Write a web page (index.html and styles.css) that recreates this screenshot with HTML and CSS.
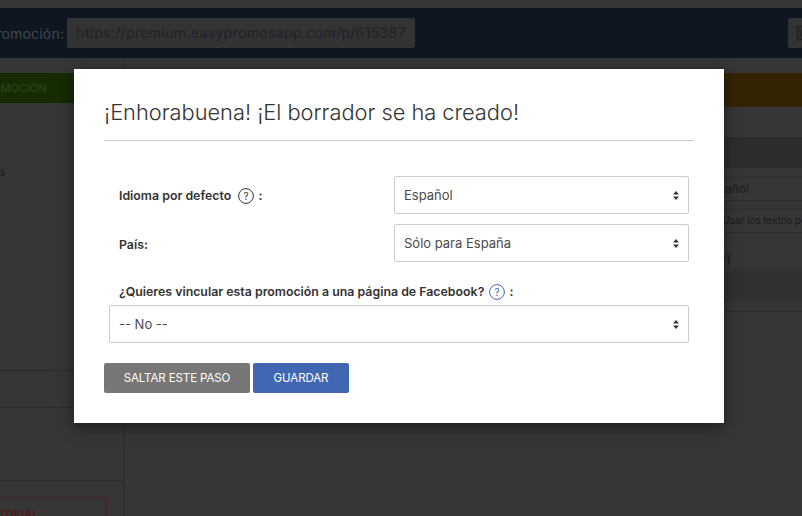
FILE: index.html
```html
<!DOCTYPE html>
<html lang="es">
<head>
<meta charset="utf-8">
<title>Promoción</title>
<link rel="stylesheet" href="styles.css">
</head>
<body>
<div class="page">
  <header class="topbar">
    <span class="url-label">Promoción:</span>
    <span class="url-field">https://premium.easypromosapp.com/p/615387</span>
    <span class="top-action">
      <svg class="top-icon" width="14" height="16" viewBox="0 0 14 16"><path d="M1.5 1.5h11v13h-11z M4.5 4v8" fill="none" stroke="#1f1f1f" stroke-width="1.5"/></svg>
    </span>
  </header>
  <div class="workspace">
    <aside class="sidebar">
      <div class="side-green">PROMOCIÓN</div>
      <div class="side-item">Opciones</div>
      <div class="side-rule side-rule-a"></div>
      <div class="side-rule side-rule-b"></div>
      <div class="side-rule side-rule-c"></div>
      <div class="tutorial">TUTORIAL</div>
    </aside>
    <main class="content">
      <div class="amber"></div>
      <div class="band"></div>
      <div class="row row-a">Español</div>
      <div class="row row-b">Usar los textos por defecto</div>
      <div class="row row-c">(ver)</div>
      <div class="band-light"></div>
      <div class="content-rule"></div>
    </main>
  </div>
  <section class="modal">
    <h2 class="modal-title">¡Enhorabuena! ¡El borrador se ha creado!</h2>
    <form class="form">
      <div class="field">
        <label class="field-label">Idioma por defecto
          <svg class="help help-first" width="16" height="16" viewBox="0 0 16 16"><circle cx="8" cy="8" r="7.4" fill="none" stroke="#333" stroke-width="1"/><text x="8" y="11.6" text-anchor="middle" class="help-mark">?</text></svg>
          :</label>
        <span class="select-wrap">
          <select class="select"><option>Español</option></select>
          <svg class="caret" width="6" height="9" viewBox="0 0 6 9"><path d="M3 0l3 3.5H0zM3 9L0 5.5h6z" fill="#333"/></svg>
        </span>
      </div>
      <div class="field">
        <label class="field-label">País:</label>
        <span class="select-wrap">
          <select class="select"><option>Sólo para España</option></select>
          <svg class="caret" width="6" height="9" viewBox="0 0 6 9"><path d="M3 0l3 3.5H0zM3 9L0 5.5h6z" fill="#333"/></svg>
        </span>
      </div>
      <div class="field-stack">
        <label class="stack-label">¿Quieres vincular esta promoción a una página de Facebook?
          <svg class="help" width="16" height="16" viewBox="0 0 16 16"><circle cx="8" cy="8" r="7.4" fill="none" stroke="#4267b2" stroke-width="1"/><text x="8" y="11.6" text-anchor="middle" class="help-mark help-blue">?</text></svg>
          :</label>
        <span class="select-wrap">
          <select class="select"><option>-- No --</option></select>
          <svg class="caret" width="6" height="9" viewBox="0 0 6 9"><path d="M3 0l3 3.5H0zM3 9L0 5.5h6z" fill="#333"/></svg>
        </span>
      </div>
      <div class="actions">
        <button type="button" class="btn btn-grey">SALTAR ESTE PASO</button>
        <button type="button" class="btn btn-blue">GUARDAR</button>
      </div>
    </form>
  </section>
</div>
</body>
</html>
```
FILE: styles.css
```css
* { box-sizing: border-box; }
html, body { margin: 0; padding: 0; }
body { background: #363636; font-family: Inter, "Liberation Sans", sans-serif; }

.page { position: relative; width: 802px; height: 516px; padding-top: 8px; overflow: hidden; background: #363636; }

.topbar {
  display: flex; align-items: center; height: 50px;
  background: #0e1622; white-space: nowrap;
}
.url-label {
  flex: none; width: 75px; margin-left: -13px;
  font-size: 14px; letter-spacing: 0.2px; color: #43474d; font-weight: 400;
}
.url-field {
  flex: none; width: 348px; height: 30px; margin-left: 5px; padding-left: 9px;
  background: #333; border-radius: 2px; color: #1e2229;
  font-size: 14px; line-height: 30px; letter-spacing: 0.35px;
}
.top-action {
  flex: none; display: flex; align-items: center; width: 40px; height: 30px;
  margin-left: 373px; padding-left: 8px; background: #333; border-radius: 2px;
}
.top-icon { flex: none; }

.workspace { display: flex; height: 458px; }
.sidebar { flex: none; width: 124px; border-right: 1px solid #2b2b2b; padding-top: 15px; }
.side-green {
  width: 124px; height: 30px; background: #152b04;
  color: #2a4a18; font-size: 11px; line-height: 30px; text-indent: -22px;
  overflow: hidden; white-space: nowrap;
}
.side-item {
  height: 18px; margin: 60px 0 0 -44px;
  font-size: 11px; line-height: 18px; color: #1d1d1d;
}
.side-rule { height: 1px; background: #2b2b2b; }
.side-rule-a { margin-top: 189px; }
.side-rule-b { margin-top: 36px; }
.side-rule-c { margin-top: 72px; }
.tutorial {
  width: 107px; height: 30px; margin-top: 16px;
  border: 1px solid #4a1f1f; border-left: 0; border-radius: 0 2px 2px 0;
  color: #4f1d1d; font-size: 11px; font-weight: 700; line-height: 33px; text-indent: -17px;
  overflow: hidden; white-space: nowrap;
}

.content { flex: 1; min-width: 0; padding-top: 15px; overflow: hidden; font-size: 12px; color: #191c20; white-space: nowrap; }
.amber { height: 34px; background: #352404; }
.band { height: 31px; margin-top: 30px; background: #2d2d2d; }
.row { padding-left: 580px; }
.row-a { height: 24px; margin-top: 9px; border-top: 1px solid #2b2b2b; border-bottom: 1px solid #2b2b2b; line-height: 22px; }
.row-b {
  height: 24px; margin-top: 8px; border-top: 1px solid #2b2b2b; border-bottom: 1px solid #2b2b2b;
  font-size: 10.5px; letter-spacing: -0.25px; line-height: 22px; text-indent: 18px;
}
.row-c { height: 36px; padding-top: 16px; line-height: 20px; }
.band-light { height: 32px; background: #303030; }
.content-rule { height: 1px; margin-top: 10px; background: #2b2b2b; }

.modal {
  position: absolute; left: 74px; top: 69px; width: 650px; height: 354px;
  padding: 30px; background: #fff; color: #333;
  box-shadow: 0 4px 14px rgba(0, 0, 0, 0.5);
}
.modal-title {
  margin: 0; height: 42px; border-bottom: 1px solid #ccc;
  font-size: 21.8px; font-weight: 300; line-height: 27px; color: #333;
}
.form { display: block; padding-top: 35px; }
.field { display: flex; align-items: center; height: 38px; margin-bottom: 10px; padding-right: 5px; }
.field-label { flex: none; width: 290px; padding: 2px 0 0 15px; font-size: 12.35px; font-weight: 600; color: #333; }
.help { vertical-align: -4px; margin: 0 1px 0 2px; }
.help-first { margin-left: 4px; }
.help-mark { font-family: Inter, "Liberation Sans", sans-serif; font-size: 10px; font-weight: 400; fill: #333; }
.help-blue { fill: #4267b2; }
.select-wrap { position: relative; display: block; flex: 1; min-width: 0; height: 38px; }
.select {
  display: block; width: 100%; height: 38px; padding: 0 9px; margin: 0;
  border: 1px solid #ccc; border-radius: 2px; background: #fff; color: #4a4a4a;
  font-family: inherit; font-size: 13px; -webkit-appearance: none; appearance: none;
}
.caret { position: absolute; right: 10px; top: 15px; }
.field-stack { padding: 12px 5px 0; }
.stack-label { display: block; height: 21px; padding-left: 10px; font-size: 12.35px; font-weight: 600; line-height: 16px; color: #333; }
.actions { display: flex; gap: 3px; margin-top: 20px; }
.btn {
  height: 30px; padding: 0; border: 0; border-radius: 2px; color: #fff;
  font-family: inherit; font-size: 11.5px; line-height: 30px; letter-spacing: -0.1px;
}
.btn-grey { width: 146px; background: #777; }
.btn-blue { width: 96px; background: #4267b2; }
```
